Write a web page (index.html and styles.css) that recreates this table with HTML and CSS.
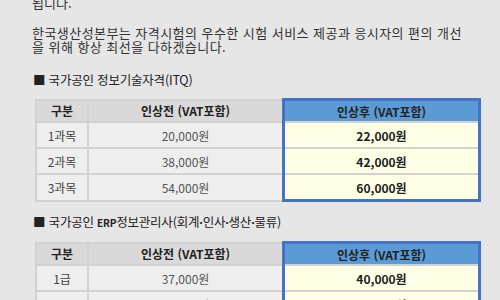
FILE: index.html
```html
<!DOCTYPE html>
<html lang="ko">
<head>
<meta charset="utf-8">
<link rel="stylesheet" href="styles.css">
</head>
<body>
<div class="page">
  <p class="intro">됩니다.</p>
  <p class="text">한국생산성본부는 자격시험의 우수한 시험 서비스 제공과 응시자의 편의 개선<br>을 위해 항상 최선을 다하겠습니다.</p>

  <h3 class="sec">■ 국가공인 정보기술자격(ITQ)</h3>
  <table class="price">
    <thead>
      <tr><th class="c1">구분</th><th class="c2">인상전 (VAT포함)</th><th class="c3">인상후 (VAT포함)</th></tr>
    </thead>
    <tbody>
      <tr><td class="c1">1과목</td><td class="c2">20,000원</td><td class="c3">22,000원</td></tr>
      <tr><td class="c1">2과목</td><td class="c2">38,000원</td><td class="c3">42,000원</td></tr>
      <tr class="last"><td class="c1">3과목</td><td class="c2">54,000원</td><td class="c3">60,000원</td></tr>
    </tbody>
  </table>

  <h3 class="sec sec2">■ 국가공인 <span class="erp">ERP</span>정보관리사(회계<span class="dot">·</span>인사<span class="dot">·</span>생산<span class="dot">·</span>물류)</h3>
  <table class="price">
    <thead>
      <tr><th class="c1">구분</th><th class="c2">인상전 (VAT포함)</th><th class="c3">인상후 (VAT포함)</th></tr>
    </thead>
    <tbody>
      <tr><td class="c1">1급</td><td class="c2">37,000원</td><td class="c3">40,000원</td></tr>
      <tr class="last"><td class="c1">2급</td><td class="c2">32,000원</td><td class="c3">35,000원</td></tr>
    </tbody>
  </table>
</div>
</body>
</html>
```

FILE: styles.css
```css
html, body {
  margin: 0;
  padding: 0;
  background: #e6e6e6;
}
body {
  font-family: "Noto Sans CJK KR", "Noto Sans", sans-serif;
  color: #333;
  overflow: hidden;
}
.page {
  padding-left: 32px;
  width: 460px;
}
.intro {
  margin: -4px 0 0 0;
  font-size: 13px;
  line-height: 14px;
}
.text {
  margin: 16px 0 0 0;
  font-size: 13px;
  line-height: 14px;
  letter-spacing: 0.45px;
}
.sec {
  margin: 19px 0 0 1px;
  font-size: 12.5px;
  font-weight: normal;
  line-height: 14px;
  color: #222;
  letter-spacing: -0.2px;
}
.sec2 {
  margin-top: 13px;
}
.erp {
  font-size: 10px;
  font-weight: bold;
}
.dot {
  font-family: "Noto Sans", sans-serif;
  font-weight: bold;
}
.price {
  margin: 11px 0 0 3px;
  border-collapse: collapse;
  width: 446px;
  font-size: 12px;
  table-layout: fixed;
}
.price th, .price td {
  padding: 0;
  text-align: center;
  border: 2px solid #d2d2d2;
}
.price th {
  height: 20px;
  background: #d9d9d9;
  font-weight: bold;
  color: #222;
}
.price td {
  height: 24px;
  background: #eeeeee;
  color: #555;
}
.price .c1 { width: 50px; }
.price td.c1 { color: #444; }
.price .c2 { width: 193px; }
.price th.c3 {
  background: #5b9bd5;
  border: 3px solid #4472c4;
  border-bottom: 2px solid #d2d2d2;
  color: #222;
}
.price td.c3 {
  background: #ffffe6;
  border-left: 3px solid #4472c4;
  border-right: 3px solid #4472c4;
  color: #222;
  font-weight: bold;
}
.price tr.last td.c3 {
  border-bottom: 3px solid #4472c4;
}
```
